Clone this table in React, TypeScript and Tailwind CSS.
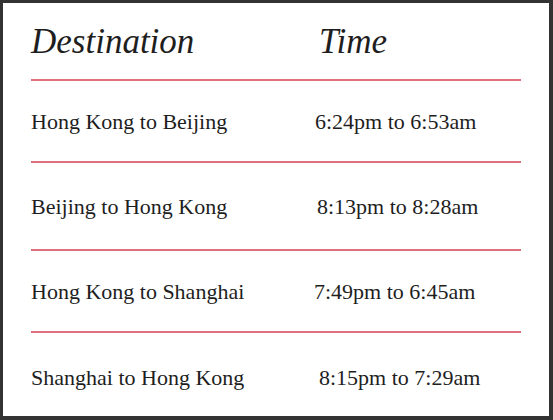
const rows = [
  { route: "Hong Kong to Beijing", time: "6:24pm to 6:53am", h: "h-[80px]", pad: "pt-0", shift: "ml-[-2px]" },
  { route: "Beijing to Hong Kong", time: "8:13pm to 8:28am", h: "h-[86px]", pad: "pt-0", shift: "ml-0" },
  { route: "Hong Kong to Shanghai", time: "7:49pm to 6:45am", h: "h-[80px]", pad: "pt-0", shift: "ml-[-3px]" },
  { route: "Shanghai to Hong Kong", time: "8:15pm to 7:29am", h: "h-[83px]", pad: "pt-[6px]", shift: "ml-[2px]" },
];

function Rule() {
  return <div className="h-[2px] bg-[#e0707e]" />;
}

export default function App() {
  return (
    <div className="w-[553px] h-[420px] bg-white border-[#333333] border-t-[3px] border-l-[3px] border-r-[4px] border-b-[4px] text-[#1e1e1e] font-['Liberation_Serif',serif]">
      <div className="pl-[28px] pr-[28px]">
        <div className="h-[76px] grid grid-cols-[288px_1fr] items-center pt-[2px] text-[35px] italic">
          <span>Destination</span>
          <span>Time</span>
        </div>
        {rows.map((r) => (
          <div key={r.route}>
            <Rule />
            <div className={`${r.h} ${r.pad} grid grid-cols-[286px_1fr] items-center text-[22px]`}>
              <span>{r.route}</span>
              <span className={r.shift}>{r.time}</span>
            </div>
          </div>
        ))}
      </div>
    </div>
  );
}
